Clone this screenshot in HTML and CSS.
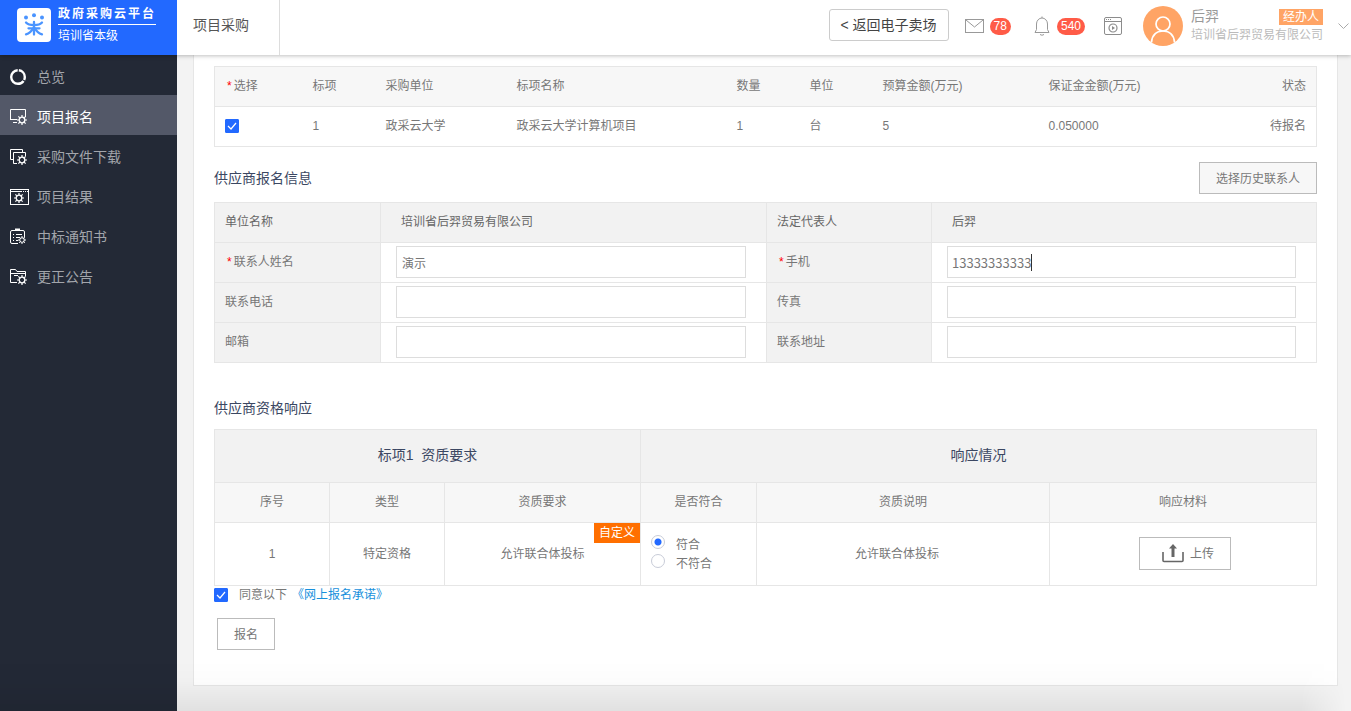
FILE: index.html
```html
<!DOCTYPE html>
<html lang="zh-CN">
  <head>
    <meta charset="UTF-8" />
    <meta name="viewport" content="width=device-width, initial-scale=1.0" />
    <title>项目采购 - 政府采购云平台</title>
    <link rel="stylesheet" href="styles.css">
  </head>
  <body>
    <!-- 齿轮图形，侧边栏图标共用 -->
    <svg class="sprite" width="0" height="0" aria-hidden="true">
      <symbol id="gear" viewBox="0 0 10 10">
        <circle cx="5" cy="5" r="2.8" fill="none" stroke="currentColor" stroke-width="1.3" />
        <path d="M5 0v2M5 8v2M0 5h2M8 5h2M1.4 1.4l1.4 1.4M7.2 7.2l1.4 1.4M8.6 1.4L7.2 2.8M2.8 7.2L1.4 8.6" stroke="currentColor" stroke-width="1.2" />
      </symbol>
    </svg>

    <header class="header">
      <a class="brand" href="#">
        <svg class="brand-logo" viewBox="0 0 34 34" aria-hidden="true">
          <rect width="34" height="34" rx="4" fill="#fff" />
          <g fill="#4a94ff">
            <circle cx="9" cy="9.5" r="2" />
            <circle cx="17" cy="7.3" r="2" />
            <circle cx="25" cy="9.5" r="2" />
          </g>
          <g fill="none" stroke="#4a94ff" stroke-width="2.3" stroke-linecap="round">
            <path d="M9 14.500C12 18 22 18 25 14.500" />
            <path d="M17 14v12.500" />
            <path d="M11.500 20.300h11" />
            <path d="M16 20.500C14.500 23.500 12 25.500 9 26.300M18 20.500C19.500 23.500 22 25.500 25 26.300" />
          </g>
        </svg>
        <span class="brand-text">
          <strong class="brand-name">政府采购云平台</strong>
          <span class="brand-sub">培训省本级</span>
        </span>
      </a>
      <div class="header-title">项目采购</div>
      <div class="header-tools">
        <button type="button" class="back-btn">&lt; 返回电子卖场</button>
        <a class="tool mail" href="#" aria-label="消息">
          <svg width="20" height="16" viewBox="0 0 20 16" fill="none" stroke="#999" aria-hidden="true">
            <rect x="0.500" y="1.500" width="18" height="13" />
            <path d="M1 2l8.500 7L18 2" />
          </svg>
          <span class="count">78</span>
        </a>
        <a class="tool bell" href="#" aria-label="通知">
          <svg width="16" height="20" viewBox="0 0 16 20" fill="none" stroke="#999" aria-hidden="true">
            <path d="M2.500 13.500V8a5.500 6 0 0 1 11 0v5.500l1.500 3H1z" />
            <path d="M8 0.500V2M6 18.500q2 1.500 4 0" />
          </svg>
          <span class="count">540</span>
        </a>
        <a class="tool video" href="#" aria-label="操作视频">
          <svg width="19" height="19" viewBox="0 0 19 19" fill="none" stroke="#8c8c8c" aria-hidden="true">
            <rect x="0.500" y="0.500" width="17" height="17" rx="1.500" />
            <path d="M1 4.500h16" />
            <path d="M2 2.500h6" stroke-dasharray="1 1" />
            <circle cx="9" cy="11" r="4" stroke-width="1.200" />
            <path d="M8 9l3 2-3 2z" fill="#8c8c8c" stroke="none" />
          </svg>
        </a>
        <svg class="avatar" viewBox="0 0 40 40" aria-hidden="true">
          <circle cx="20" cy="20" r="20" fill="#ffa465" />
          <g fill="none" stroke="#fff" stroke-width="1.700">
            <circle cx="20" cy="18" r="7" />
            <path d="M8.500 36.500C9 29 13.500 25 20 25s11 4 11.500 11.500" />
          </g>
        </svg>
        <div class="user">
          <div class="user-top">
            <span class="user-name">后羿</span>
            <span class="user-role">经办人</span>
          </div>
          <div class="user-company">培训省后羿贸易有限公司</div>
        </div>
        <button type="button" class="user-more" aria-label="展开">
          <svg width="11" height="7" viewBox="0 0 11 7" fill="none" stroke="#aaa" aria-hidden="true">
            <path d="M0.500 0.500l5 5 5-5" />
          </svg>
        </button>
      </div>
    </header>

    <div class="layout">
      <nav class="sidebar">
        <a class="menu-item" href="#">
          <svg class="menu-icon" viewBox="0 0 19 18" aria-hidden="true">
            <circle cx="8" cy="9" r="6.800" fill="none" stroke="#fff" stroke-width="2.400" stroke-dasharray="3 1.200 27.300 1.200 10.100" />
          </svg>
          总览
        </a>
        <a class="menu-item active" href="#">
          <svg class="menu-icon" viewBox="0 0 19 18" fill="none" stroke="#fff" aria-hidden="true">
            <path d="M0.500 11.500v-10h15V9M0 11.500h7M3 14.500h4" />
            <use href="#gear" x="7" y="7" width="10" height="10" />
          </svg>
          项目报名
        </a>
        <a class="menu-item" href="#">
          <svg class="menu-icon" viewBox="0 0 19 18" fill="none" stroke="#fff" aria-hidden="true">
            <path d="M3 11.500H0.500v-10h12V4" />
            <path d="M7 15.500H3.500v-11h12V8" />
            <use href="#gear" x="7" y="7" width="10" height="10" />
          </svg>
          采购文件下载
        </a>
        <a class="menu-item" href="#">
          <svg class="menu-icon" viewBox="0 0 19 18" fill="none" stroke="#fff" aria-hidden="true">
            <rect x="0.500" y="1.500" width="18" height="15" />
            <path d="M1 3.500h11M13 3.500h1M15 3.500h1M17 3.500h1" />
            <use href="#gear" x="4" y="5" width="10" height="10" />
          </svg>
          项目结果
        </a>
        <a class="menu-item" href="#">
          <svg class="menu-icon" viewBox="0 0 19 18" fill="none" stroke="#fff" aria-hidden="true">
            <path d="M8 15.500H2q-1.500 0-1.500-1.500V4q0-1.500 1.500-1.500h11q1.500 0 1.500 1.500v5" />
            <path d="M5 1.500h5" stroke-width="2" />
            <path d="M3 6.500h1M6 6.500h6M3 9.500h1M6 9.500h4M3 12.500h1M6 12.500h2" />
            <use href="#gear" x="8" y="8" width="8" height="8" />
          </svg>
          中标通知书
        </a>
        <a class="menu-item" href="#">
          <svg class="menu-icon" viewBox="0 0 19 18" fill="none" stroke="#fff" aria-hidden="true">
            <path d="M7 14.500H0.500v-13h5l1.500 2h8.500V8" />
            <path d="M1 5.500h14M4 7.500h4" />
            <use href="#gear" x="7" y="7" width="10" height="10" />
          </svg>
          更正公告
        </a>
      </nav>

      <main class="main">
        <form class="panel">
          <table class="item-table">
            <colgroup>
              <col class="w-check" />
              <col class="w-small" />
              <col class="w-unit" />
              <col class="w-name" />
              <col class="w-small" />
              <col class="w-small" />
              <col class="w-budget" />
              <col class="w-deposit" />
              <col class="w-status" />
            </colgroup>
            <thead>
              <tr>
                <th><span class="required">*</span>选择</th>
                <th>标项</th>
                <th>采购单位</th>
                <th>标项名称</th>
                <th>数量</th>
                <th>单位</th>
                <th>预算金额(万元)</th>
                <th>保证金金额(万元)</th>
                <th class="right">状态</th>
              </tr>
            </thead>
            <tbody>
              <tr>
                <td><input type="checkbox" class="checkbox" aria-label="选择标项1" checked /></td>
                <td>1</td>
                <td>政采云大学</td>
                <td>政采云大学计算机项目</td>
                <td>1</td>
                <td>台</td>
                <td>5</td>
                <td>0.050000</td>
                <td class="right">待报名</td>
              </tr>
            </tbody>
          </table>

          <div class="section-head">
            <h2>供应商报名信息</h2>
            <button type="button" class="btn btn-gray">选择历史联系人</button>
          </div>
          <table class="info-table">
            <colgroup>
              <col class="w-label" />
              <col class="w-field" />
              <col class="w-label-right" />
              <col class="w-field-right" />
            </colgroup>
            <tbody>
              <tr class="info-company">
                <th>单位名称</th>
                <td>培训省后羿贸易有限公司</td>
                <th>法定代表人</th>
                <td>后羿</td>
              </tr>
              <tr>
                <th><label for="contact"><span class="required">*</span>联系人姓名</label></th>
                <td><input type="text" class="text-input" id="contact" value="演示" /></td>
                <th><label for="mobile"><span class="required">*</span>手机</label></th>
                <td>
                  <div class="mobile-box">
                    <input type="text" class="text-input number" id="mobile" value="13333333333" />
                  </div>
                </td>
              </tr>
              <tr>
                <th><label for="phone">联系电话</label></th>
                <td><input type="text" class="text-input" id="phone" /></td>
                <th><label for="fax">传真</label></th>
                <td><input type="text" class="text-input" id="fax" /></td>
              </tr>
              <tr>
                <th><label for="email">邮箱</label></th>
                <td><input type="text" class="text-input" id="email" /></td>
                <th><label for="address">联系地址</label></th>
                <td><input type="text" class="text-input" id="address" /></td>
              </tr>
            </tbody>
          </table>

          <div class="section-head section-quality">
            <h2>供应商资格响应</h2>
          </div>
          <table class="quality-table">
            <colgroup>
              <col class="w-index" />
              <col class="w-index" />
              <col class="w-require" />
              <col class="w-match" />
              <col class="w-explain" />
              <col class="w-material" />
            </colgroup>
            <thead>
              <tr class="group-row">
                <th colspan="3">标项1&nbsp; 资质要求</th>
                <th colspan="3">响应情况</th>
              </tr>
              <tr class="name-row">
                <th>序号</th>
                <th>类型</th>
                <th>资质要求</th>
                <th>是否符合</th>
                <th>资质说明</th>
                <th>响应材料</th>
              </tr>
            </thead>
            <tbody>
              <tr>
                <td>1</td>
                <td>特定资格</td>
                <td class="require">允许联合体投标<span class="tag">自定义</span></td>
                <td class="match">
                  <label><input type="radio" class="radio" name="match" checked />符合</label>
                  <label><input type="radio" class="radio" name="match" />不符合</label>
                </td>
                <td class="explain">允许联合体投标</td>
                <td class="material">
                  <button type="button" class="btn upload">
                    <svg width="22" height="20" viewBox="0 0 22 20" fill="none" stroke="#666" aria-hidden="true">
                      <path d="M1 9v8.500q0 1 1 1h18q1 0 1-1V9" stroke-width="1.600" />
                      <path d="M11 14V5" stroke-width="3" />
                      <path d="M7 5.500L11 1l4 4.500z" fill="#666" stroke="none" />
                    </svg>
                    上传
                  </button>
                </td>
              </tr>
            </tbody>
          </table>

          <div class="agree">
            <input type="checkbox" class="checkbox" id="agree" checked />
            <label for="agree">同意以下</label>
            <a href="#">《网上报名承诺》</a>
          </div>
          <button type="submit" class="btn submit">报名</button>
        </form>
      </main>
    </div>
    <div class="bottom-shade"></div>
  </body>
</html>
```

FILE: styles.css
```css
* {
  box-sizing: border-box;
}

body {
  margin: 0;
  min-height: 100vh;
  display: flex;
  flex-direction: column;
  background-color: #f3f3f3;
  color: #777;
  font-family: "Liberation Sans", "Noto Sans CJK SC", sans-serif;
  font-size: 12px;
  line-height: 18px;
}

a {
  text-decoration: none;
}

button,
input {
  font-family: inherit;
  margin: 0;
}

.sprite {
  position: absolute;
}

/* 顶部 */
.header {
  position: sticky;
  top: 0;
  z-index: 10;
  display: flex;
  height: 55px;
  background-color: #fff;
  box-shadow: 0 1px 4px rgba(0, 0, 0, 0.25);
}

.brand {
  display: flex;
  gap: 7px;
  width: 177px;
  padding: 4px 0 0 17px;
  background-color: #2269ff;
  color: #fff;
}

.brand-logo {
  width: 34px;
  height: 34px;
  margin-top: 4px;
}

.brand-text {
  display: flex;
  flex-direction: column;
}

.brand-name {
  height: 21px;
  border-bottom: 1px solid #fff;
  letter-spacing: 2px;
  line-height: 20px;
}

.brand-sub {
  line-height: 22px;
}

.header-title {
  width: 103px;
  padding-left: 16px;
  border-right: 1px solid #ddd;
  color: #555;
  font-size: 14px;
  line-height: 50px;
}

.header-tools {
  display: flex;
  align-items: center;
  margin-left: auto;
  height: 52px;
  padding-right: 2px;
}

.back-btn {
  height: 32px;
  width: 120px;
  margin: 0 16px 2px 0;
  padding: 0 0 2px;
  background-color: #fff;
  border: 1px solid #ccc;
  border-radius: 3px;
  color: #444;
  font-size: 14px;
}

.tool {
  display: flex;
  align-items: center;
  gap: 6px;
}

.mail {
  gap: 5px;
  margin-right: 23px;
}

.bell {
  gap: 7px;
  margin-right: 19px;
}

.video {
  margin-right: 20px;
}

.count {
  height: 17px;
  padding: 0 4px;
  border-radius: 9px;
  background-color: #ff5b47;
  color: #fff;
  font-size: 12px;
  line-height: 17px;
}

.avatar {
  width: 40px;
  height: 40px;
  margin-right: 8px;
}

.user {
  margin-right: 15px;
}

.user-top {
  display: flex;
  align-items: center;
  justify-content: space-between;
  height: 18px;
}

.user-name {
  padding-bottom: 2px;
  color: #999;
  font-size: 14px;
}

.user-role {
  padding: 0 4px;
  background-color: #ffa465;
  color: #fff;
  line-height: 16px;
}

.user-company {
  color: #bbb;
}

.user-more {
  display: flex;
  padding: 0;
  border: none;
  background: none;
}

/* 侧边栏 */
.layout {
  display: flex;
  flex: 1;
}

.sidebar {
  flex: none;
  width: 177px;
  background-color: #232936;
}

.menu-item {
  display: flex;
  align-items: center;
  gap: 8px;
  height: 40px;
  padding: 4px 0 0 10px;
  color: #a2a5ab;
  font-size: 14px;
}

.menu-item.active {
  background-color: #535868;
  color: #fff;
}

.menu-icon {
  width: 19px;
  height: 18px;
  color: #fff;
}

/* 内容区 */
.main {
  flex: 1;
  min-width: 0;
  padding: 0 13px 25px 16px;
}

.panel {
  padding: 11px 20px 35px;
  background-color: #fff;
  border: 1px solid #e6e6e6;
  border-top: none;
}

table {
  width: 100%;
  table-layout: fixed;
  border-collapse: collapse;
}

th,
td {
  height: 40px;
  padding: 0 10px 2px;
  font-weight: normal;
  text-align: left;
}

.right {
  text-align: right;
}

.required {
  margin: 0 2px;
  color: #f00;
}

.item-table {
  border: 1px solid #e6e6e6;
}

.item-table thead {
  background-color: #f7f7f7;
}

.item-table tr {
  border-bottom: 1px solid #e6e6e6;
}

.w-check { width: 88px; }
.w-small { width: 73px; }
.w-unit { width: 131px; }
.w-name { width: 220px; }
.w-budget { width: 166px; }
.w-deposit { width: 186px; }
.w-status { width: 92px; }

.checkbox {
  appearance: none;
  display: block;
  width: 14px;
  height: 14px;
  border: 1px solid #ccc;
  border-radius: 1px;
}

.checkbox:checked {
  border-color: #2269ff;
  background: #2269ff url("data:image/svg+xml,%3Csvg xmlns='http://www.w3.org/2000/svg' viewBox='0 0 12 12'%3E%3Cpath d='M2 6l3 3 5-6' fill='none' stroke='white' stroke-width='1.2'/%3E%3C/svg%3E") center / 12px no-repeat;
}

.section-head {
  display: flex;
  align-items: center;
  justify-content: space-between;
  height: 32px;
  margin: 15px 0 8px;
}

.section-quality {
  margin: 29px 0 5px;
}

h2 {
  margin: 0;
  color: #3b4762;
  font-size: 14px;
  font-weight: normal;
}

.btn {
  height: 32px;
  padding: 0 16px 2px;
  background-color: #fff;
  border: 1px solid #bbb;
  color: #777;
  font-size: 12px;
}

.btn-gray {
  background-color: #f7f7f7;
}

/* 报名信息 */
.info-table th,
.info-table td {
  border: 1px solid #e6e6e6;
}

.info-table th,
.info-company {
  background-color: #f2f2f2;
}

.info-table td {
  padding: 0 20px 1px 15px;
}

.info-company th,
.info-company td {
  color: #666;
}

.info-table .info-company td {
  padding: 0 20px 2px;
}

.w-label { width: 166px; }
.w-field { width: 386px; }
.w-label-right { width: 165px; }
.w-field-right { width: 385px; }

.text-input {
  display: block;
  width: 100%;
  height: 32px;
  padding: 0 5px;
  border: 1px solid #ddd;
  color: #777;
  font-size: 12px;
  outline: none;
}

.number {
  padding: 0 4px;
  font-family: "Noto Sans CJK SC", sans-serif;
  font-size: 13px;
}

.mobile-box {
  position: relative;
}

/* 输入光标 */
.mobile-box::after {
  content: "";
  position: absolute;
  top: 8px;
  left: 84px;
  width: 1px;
  height: 17px;
  background-color: #333;
}

/* 资格响应 */
.quality-table th,
.quality-table td {
  border: 1px solid #e6e6e6;
  text-align: center;
}

.quality-table .group-row th {
  height: 53px;
  background-color: #f2f2f2;
  color: #3b4762;
  font-size: 14px;
}

.name-row {
  background-color: #f7f7f7;
}

.quality-table td {
  height: 63px;
  padding-bottom: 0;
}

.w-index { width: 115px; }
.w-require { width: 196px; }
.w-match { width: 116px; }
.w-explain { width: 293px; }
.w-material { width: 267px; }

.require {
  position: relative;
}

.tag {
  position: absolute;
  top: 0;
  right: 0;
  padding: 0 5px;
  background-color: #ff6f00;
  color: #fff;
  line-height: 20px;
}

.quality-table .match {
  text-align: left;
}

.match label {
  display: flex;
  align-items: flex-start;
  gap: 11px;
  height: 19px;
  line-height: 20px;
}

.radio {
  appearance: none;
  width: 14px;
  height: 14px;
  border: 1px solid #c8ccd8;
  border-radius: 50%;
}

.radio:checked {
  background: radial-gradient(circle, #2269ff 3px, transparent 4px);
}

.explain {
  padding-right: 22px;
}

.quality-table .material {
  padding: 0 8px 2px 12px;
}

.upload {
  display: inline-flex;
  align-items: center;
  gap: 6px;
  height: 33px;
  padding: 0 16px 2px 22px;
  vertical-align: middle;
}

.upload svg {
  margin-top: 2px;
}

.agree {
  display: flex;
  align-items: center;
  height: 18px;
  line-height: 20px;
}

.agree label {
  margin: 0 5px 0 11px;
}

.agree a {
  color: #1890dc;
}

.submit {
  display: block;
  margin: 14px 0 0 3px;
}

/* 底部渐变阴影 */
.bottom-shade {
  position: fixed;
  right: 0;
  bottom: 0;
  left: 0;
  height: 50px;
  background: linear-gradient(transparent, rgba(0, 0, 0, 0.01) 40%, rgba(0, 0, 0, 0.07));
  mask-image: linear-gradient(to left, transparent 5px, #000 50px);
  pointer-events: none;
}
```
